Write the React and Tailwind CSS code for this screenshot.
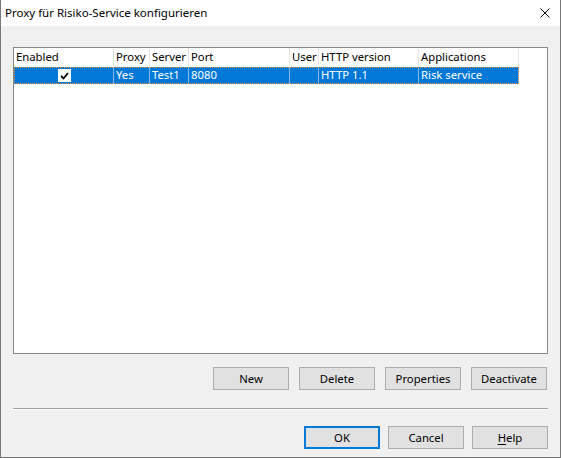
const columns = [
  { label: "Enabled", w: "w-[100px]" },
  { label: "Proxy", w: "w-[36px]" },
  { label: "Server", w: "w-[39px]" },
  { label: "Port", w: "w-[101px]" },
  { label: "User", w: "w-[29px]" },
  { label: "HTTP version", w: "w-[100px]" },
  { label: "Applications", w: "w-[100px]" },
];

const row = ["", "Yes", "Test1", "8080", "", "HTTP 1.1", "Risk service"];

const Button = ({ children, primary }) => (
  <button
    className={`w-[76px] h-[23px] bg-[#e1e1e1] text-black font-normal text-[11.3px] leading-none ${
      primary ? "border-2 border-[#0078d7]" : "border border-[#adadad]"
    }`}
  >
    {children}
  </button>
);

export default function App() {
  return (
    <div
      className="w-[561px] h-[458px] flex flex-col bg-[#f0f0f0] border-x border-b border-[#777777] text-[11.3px] text-black"
      style={{ fontFamily: '"Noto Sans", "Open Sans", sans-serif' }}
    >
      {/* Title bar */}
      <div className="h-[26px] bg-white flex items-center justify-between pl-[4px] pr-[10px] shrink-0">
        <span className="text-[11.5px]">Proxy für Risiko-Service konfigurieren</span>
        <svg width="10" height="10" viewBox="0 0 10 10">
          <path d="M0.5 0.5 L9.5 9.5 M9.5 0.5 L0.5 9.5" stroke="black" strokeWidth="1" fill="none" />
        </svg>
      </div>

      {/* Client area */}
      <div className="flex-1 flex flex-col px-[12px]">
        {/* List box */}
        <div className="mt-[21px] h-[307px] bg-white border border-[#828790] flex flex-col">
          <div className="flex h-[19px] items-center">
            {columns.map((c) => (
              <div
                key={c.label}
                className={`${c.w} h-full border-r border-[#e5e5e5] pl-[2px] flex items-center shrink-0`}
              >
                {c.label}
              </div>
            ))}
          </div>
          <div className="flex">
            <div className="flex h-[17px] bg-[#0078d7] text-white outline-1 outline-dotted outline-[#e08b3c] -outline-offset-1">
              {columns.map((c, i) => (
                <div
                  key={c.label}
                  className={`${c.w} h-full border-r border-[#8cb8e6] pl-[2px] flex items-center shrink-0 ${
                    i === 0 ? "justify-center pl-0" : ""
                  }`}
                >
                  {i === 0 ? (
                    <div className="w-[13px] h-[13px] bg-white flex items-center justify-center">
                      <svg width="9" height="8" viewBox="0 0 9 8">
                        <path d="M1 4 L3.5 6.5 L8 1" stroke="black" strokeWidth="1.8" fill="none" />
                      </svg>
                    </div>
                  ) : (
                    row[i]
                  )}
                </div>
              ))}
            </div>
          </div>
        </div>

        {/* Action buttons */}
        <div className="flex justify-end gap-[10px] mt-[13px] pr-[1px]">
          <Button>New</Button>
          <Button>Delete</Button>
          <Button>Properties</Button>
          <Button>Deactivate</Button>
        </div>

        {/* Separator */}
        <div className="mt-[18px] border-t border-[#a0a0a0] border-b border-b-white" />

        {/* Dialog buttons */}
        <div className="flex justify-end gap-[8px] mt-[16px]">
          <Button primary>OK</Button>
          <Button>Cancel</Button>
          <Button>
            <span className="underline underline-offset-2">H</span>elp
          </Button>
        </div>
      </div>
    </div>
  );
}
